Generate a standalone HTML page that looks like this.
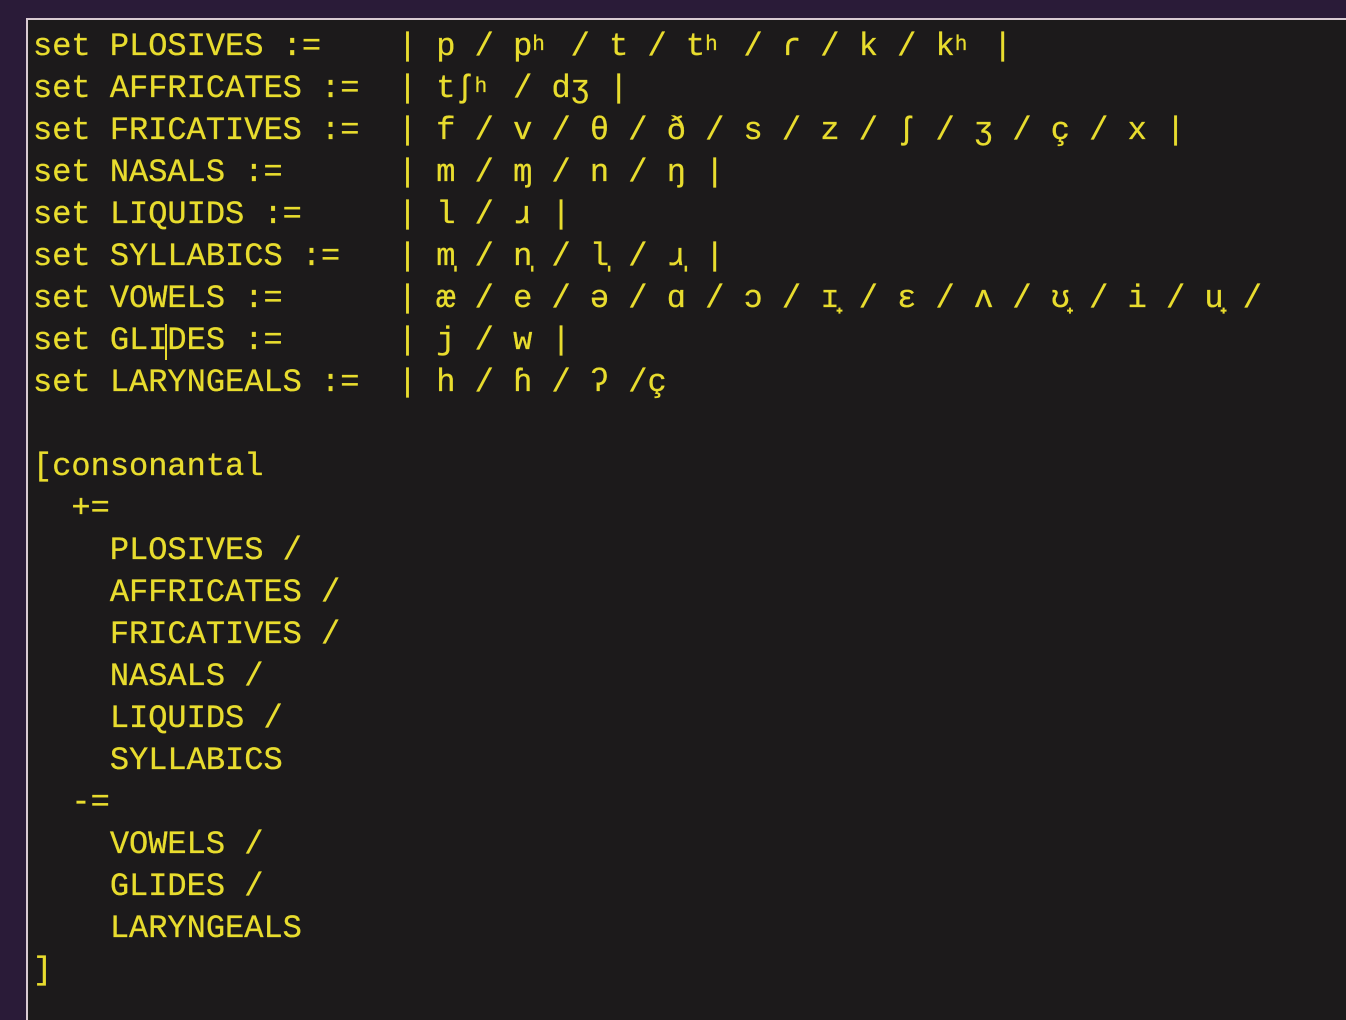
<!DOCTYPE html>
<html><head><meta charset="utf-8"><style>
html,body{margin:0;padding:0;background:#2a1b38;width:1346px;height:1006px;overflow:hidden}
.ed{position:absolute;left:26px;top:18px;width:1330px;height:1000px;background:#1c1a1b;border-left:2px solid #d9cbd3;border-top:2px solid #d9cbd3}
pre{position:absolute;left:33px;top:26px;margin:0;font-family:"Liberation Mono","DejaVu Sans Mono",monospace;font-size:32px;line-height:42px;color:#e8dc2e;white-space:pre;-webkit-text-stroke:0.3px #e8dc2e}
.s{display:inline-block;width:19.2px;font-size:21px;vertical-align:5px;line-height:1}
.cur{position:absolute;left:165px;top:324px;width:2px;height:36px;background:#e8dc2e}
</style></head><body>
<div class="ed"></div>
<pre>set PLOSIVES :=    | p / p<span class="s">h</span> / t / t<span class="s">h</span> / ɾ / k / k<span class="s">h</span> |
set AFFRICATES :=  | tʃ<span class="s">h</span> / dʒ |
set FRICATIVES :=  | f / v / θ / ð / s / z / ʃ / ʒ / ç / x |
set NASALS :=      | m / ɱ / n / ŋ |
set LIQUIDS :=     | l / ɹ |
set SYLLABICS :=   | m̩ / n̩ / l̩ / ɹ̩ |
set VOWELS :=      | æ / e / ə / ɑ / ɔ / ɪ̟ / ɛ / ʌ / ʊ̟ / i / u̟ /
set GLIDES :=      | j / w |
set LARYNGEALS :=  | h / ɦ / ʔ /ç

[consonantal
  +=
    PLOSIVES /
    AFFRICATES /
    FRICATIVES /
    NASALS /
    LIQUIDS /
    SYLLABICS
  -=
    VOWELS /
    GLIDES /
    LARYNGEALS
]</pre>
<div class="cur"></div>
</body></html>
